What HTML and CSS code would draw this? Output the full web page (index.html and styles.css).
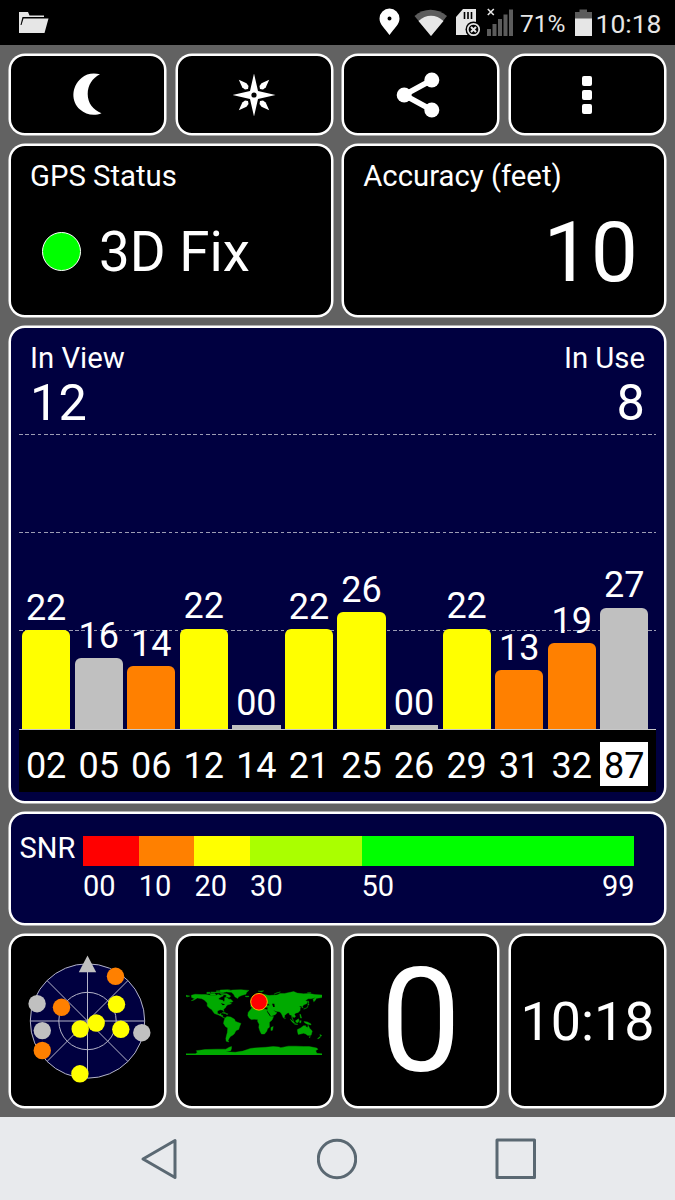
FILE: index.html
```html
<!DOCTYPE html>
<html lang="en">
<head>
    <meta charset="UTF-8">
    <meta name="viewport" content="width=device-width, initial-scale=1.0">
    <title>GPS Test</title>
    <link rel="stylesheet" href="styles.css">
</head>
<body>
    <div class="status-bar">
        <svg class="icon-folder" width="30" height="22" viewBox="0 0 30 22">
            <path fill="#e6e6e6" d="M0 0H9L10.5 3.5H25V5H3.5L1.5 13H2.5L4.5 6.5H29.5L25.5 21H0Z"/>
        </svg>
        <div class="status-right">
            <svg width="22" height="28" viewBox="0 0 22 28">
                <path fill="#fff" fill-rule="evenodd" d="M10.5 .5A10 10 0 0 0 .5 10.5C.5 16.5 6 20.5 10.5 27C15 20.5 20.5 16.5 20.5 10.5A10 10 0 0 0 10.5 .5ZM10.5 8.500A2 2 0 1 1 10.5 12.5A2 2 0 1 1 10.5 8.500Z"/>
            </svg>
            <svg class="icon-wifi" width="34" height="28" viewBox="0 0 34 28">
                <path fill="#5c5c5c" d="M.5 7C10 -1.5 23 -1.5 33 7L17 27Z"/>
                <path fill="#e6e6e6" d="M4.5 12C12 5 22 5 29.5 12L17 27Z"/>
            </svg>
            <svg class="icon-sd" width="26" height="30" viewBox="0 0 26 30">
                <path fill="#e6e6e6" d="M7 1H20V27H0V9Z"/>
                <path stroke="#000" stroke-width="1.6" d="M8.5 4V11M12 4V11M15.5 4V11"/>
                <circle cx="17.5" cy="21.5" r="8" fill="#000"/>
                <circle cx="17.5" cy="21.5" r="5.7" fill="none" stroke="#e6e6e6" stroke-width="1.7"/>
                <path stroke="#e6e6e6" stroke-width="2" d="M15 19L20 24M20 19L15 24"/>
            </svg>
            <svg class="icon-signal" width="27" height="30" viewBox="0 0 27 30">
                <path fill="#5c5c5c" d="M0 21H4V28H0ZM5.5 16H9.5V28H5.5ZM11 11H15V28H11ZM16.5 6.5H20.5V28H16.5ZM22 1.5H26V28H22Z"/>
                <path stroke="#e6e6e6" stroke-width="1.6" d="M.8 1L6.8 7M6.8 1L.8 7"/>
            </svg>
            <span class="battery-text">71%</span>
            <svg class="icon-battery" width="17" height="28" viewBox="0 0 17 28">
                <path fill="#5c5c5c" d="M4.5 .5H12V3H17V10H0V3H4.5Z"/>
                <path fill="#e6e6e6" d="M0 9.5H17V27H0Z"/>
            </svg>
            <span class="clock-text">10:18</span>
        </div>
    </div>

    <main class="dashboard">
        <button class="tile" aria-label="Night mode">
            <svg width="44" height="46" viewBox="0 0 44 46">
                <path fill="#fff" d="M34 2.2C27 .5 20.5 1.500 15.500 6C5 15 5 29.500 14 37.500C20 43 28.500 44 35.500 41.200C27 38 21.700 31 21.700 22C21.700 13 26.500 6 34 2.200Z"/>
            </svg>
        </button>
        <button class="tile" aria-label="Compass">
            <svg width="44" height="44" viewBox="-22 -22 44 44">
                <path fill="#fff" d="M0 -21.5L4 -4L21.5 0L4 4L0 21.5L-4 4L-21.5 0L-4 -4Z"/>
                <g fill="#fff">
                    <path id="ray" d="M15.2 -15.2L11.7 -7.5L9 -5.5L6 -6L5.5 -9L7.500 -11.700Z"/>
                    <use href="#ray" transform="rotate(90)"/>
                    <use href="#ray" transform="rotate(180)"/>
                    <use href="#ray" transform="rotate(270)"/>
                </g>
                <circle r="2.6"/>
            </svg>
        </button>
        <button class="tile" aria-label="Share">
            <svg width="50" height="46" viewBox="0 0 50 46">
                <path stroke="#fff" stroke-width="5.5" fill="none" d="M35.8 8L8.2 23L35.8 38"/>
                <g fill="#fff">
                    <circle cx="8.2" cy="23" r="7.500"/>
                    <circle cx="35.8" cy="8" r="7.500"/>
                    <circle cx="35.8" cy="38" r="7.500"/>
                </g>
            </svg>
        </button>
        <button class="tile" aria-label="Menu">
            <svg width="10" height="40" viewBox="0 0 10 40">
                <g fill="#fff">
                    <rect y="1" width="10" height="10" rx="2"/>
                    <rect y="15" width="10" height="10" rx="2"/>
                    <rect y="29" width="10" height="10" rx="2"/>
                </g>
            </svg>
        </button>

        <section class="tile half">
            <div class="label">GPS Status</div>
            <div class="fix"><span class="led"></span>3D Fix</div>
        </section>
        <section class="tile half">
            <div class="label">Accuracy (feet)</div>
            <div class="accuracy">10</div>
        </section>

        <section class="tile chart">
            <div class="counts">
                <div><div class="label">In View</div><div class="count">12</div></div>
                <div class="in-use"><div class="label">In Use</div><div class="count">8</div></div>
            </div>
            <div class="plot" id="plot"></div>
            <div class="axis" id="axis"></div>
        </section>

        <section class="tile snr">
            <span class="snr-title">SNR</span>
            <div class="scale">
                <div class="band red"></div>
                <div class="band orange"></div>
                <div class="band yellow"></div>
                <div class="band lime"></div>
                <div class="band green"></div>
                <div class="tick">00</div>
                <div class="tick">10</div>
                <div class="tick">20</div>
                <div class="tick">30</div>
                <div class="tick">50<span>99</span></div>
            </div>
        </section>

        <section class="tile">
            <svg width="130" height="136" viewBox="-64.5 -68 130 136">
                <circle r="57.2" fill="#000040" stroke="#b4b4c8"/>
                <circle r="28.7" fill="none" stroke="#b4b4c8"/>
                <path stroke="#b4b4c8" d="M-57 0H57M0 -57V57M-40.4 -40.4L40.4 40.4M40.4 -40.4L-40.4 40.4"/>
                <path fill="#c0c0c0" d="M0 -65.5L8.7 -48.7H-8.7Z"/>
                <g id="sky"></g>
            </svg>
        </section>
        <section class="tile">
            <!-- longitude / negative latitude coordinates -->
            <svg class="world" width="136.5" height="68.25" viewBox="-180 -90 360 180">
                <g fill="#00aa00" stroke="#00aa00" stroke-width="1">
                    <path d="M-166 -68L-156 -71L-140 -70L-128 -70L-115 -68L-108 -68L-100 -68L-95 -71L-90 -68L-82 -69L-82 -66L-87 -64L-94 -60L-93 -57L-83 -55L-80 -51L-78 -55L-78 -62L-72 -62L-67 -58L-62 -58L-56 -52L-60 -50L-66 -50L-60 -46L-66 -44L-70 -43L-74 -39L-76 -35L-81 -31L-80 -25L-83 -29L-90 -30L-97 -27L-97 -20L-91 -18L-87 -21L-88 -16L-83 -15L-83 -10L-77 -8L-79 -8L-86 -12L-94 -16L-105 -20L-113 -31L-117 -33L-124 -40L-124 -48L-131 -55L-138 -59L-150 -61L-160 -55L-166 -54L-157 -59L-165 -62Z"/>
                    <path d="M-180 -68L-170 -66L-176 -64L-180 -65ZM-73 -78L-58 -82L-35 -83L-14 -81L-20 -76L-22 -71L-32 -68L-41 -64L-44 -60L-51 -64L-54 -70L-60 -76L-72 -77ZM-90 -73L-72 -72L-62 -66L-66 -62L-75 -65L-73 -69L-88 -71ZM-118 -73L-104 -73L-101 -69L-115 -69ZM-125 -76L-116 -76L-118 -73L-125 -72ZM-90 -82L-70 -83L-63 -82L-77 -76L-90 -77ZM-115 -77L-95 -76L-80 -75L-82 -74L-113 -75ZM-100 -80L-90 -80L-91 -78L-100 -78ZM-24 -66L-14 -66L-15 -64L-22 -64ZM-85 -22L-77 -23L-74 -20L-78 -20ZM-74 -20L-69 -19L-70 -18L-74 -18Z"/>
                    <path d="M-77 -8L-72 -12L-62 -11L-52 -5L-50 0L-44 3L-35 6L-38 13L-41 22L-48 25L-53 34L-58 38L-62 40L-66 45L-69 51L-67 55L-74 53L-75 46L-73 37L-71 30L-70 18L-76 14L-81 6L-80 0Z"/>
                    <path d="M-9 -37L-9 -43L-2 -44L-4 -48L3 -51L8 -54L9 -57L12 -55L22 -55L24 -60L29 -60L22 -61L25 -65L18 -62L16 -56L11 -59L5 -59L5 -62L15 -69L26 -71L40 -67L34 -66L44 -68L60 -69L68 -73L80 -73L95 -76L104 -78L113 -74L130 -72L145 -73L160 -70L180 -69L180 -65L178 -62L163 -60L162 -56L157 -51L155 -58L162 -62L150 -59L142 -59L135 -54L141 -52L138 -46L131 -43L127 -39L129 -36L126 -35L125 -39L121 -40L118 -39L122 -37L121 -32L121 -28L116 -23L109 -21L106 -18L109 -12L105 -9L101 -13L100 -8L104 -1L100 -6L98 -16L94 -16L91 -22L87 -21L80 -15L80 -10L77 -8L73 -17L70 -22L66 -25L57 -26L50 -30L56 -24L60 -22L55 -17L44 -13L39 -21L34 -28L36 -36L28 -37L26 -40L41 -42L37 -46L30 -46L28 -42L23 -36L19 -42L13 -45L18 -40L15 -38L8 -44L3 -42L-1 -37L-6 -36Z"/>
                    <path d="M-6 -35L10 -37L11 -33L20 -31L32 -31L37 -21L43 -12L51 -12L47 -3L40 3L40 16L35 20L33 27L27 34L19 34L15 26L12 17L13 8L9 1L9 -4L0 -5L-8 -4L-14 -9L-17 -15L-16 -23L-10 -30ZM44 17L50 14L48 24L44 25ZM-5 -50L1 -51L-2 -57L-6 -58ZM-10 -52L-6 -52L-6 -55L-10 -54Z"/>
                    <path d="M114 22L122 18L130 12L136 12L136 15L141 17L142 11L146 19L153 26L150 37L145 38L140 37L136 34L130 32L122 34L116 35L114 27ZM145 41L148 41L147 43L145 43ZM167 46L173 41L174 43L168 47ZM173 35L178 38L175 41ZM95 -5L106 3L105 6L100 2ZM106 6L115 8L114 9L106 8ZM109 -1L117 -6L118 -1L115 4L110 3ZM120 -1L124 -1L122 5L120 5ZM131 1L140 2L149 7L150 10L140 8L133 4ZM120 -18L122 -18L125 -8L122 -8ZM130 -32L139 -35L142 -41L140 -36L132 -32ZM141 -42L145 -44L142 -46ZM142 -46L144 -50L142 -54ZM80 -6L82 -7L81 -9ZM52 -71L58 -74L69 -77L56 -73ZM10 -79L25 -80L20 -77ZM140 -75L150 -75L148 -74Z"/>
                    <path d="M-180 86H-155L-150 82L-153 78L-130 75L-100 74L-75 74L-66 69L-60 67L-60 72L-62 78L-75 81L-50 82L-30 79L-10 72L10 70L30 69L50 67L65 68L70 70L90 66L110 66L130 67L145 67L165 71L168 74L162 78L165 85L180 86V90H-180Z"/>
                </g>
                <g fill="#000">
                    <path d="M47 -46L53 -46L54 -37L50 -37ZM34 -27L43 -14L41 -14L33 -26ZM-88 -47L-82 -46L-77 -43L-83 -42Z"/>
                </g>
                <circle cx="12.5" cy="-51" r="22" fill="#f00" stroke="#ffc800" stroke-width="2.5"/>
            </svg>
        </section>
        <section class="tile speed">0</section>
        <section class="tile time">10:18</section>
    </main>

    <nav class="nav-bar">
        <svg width="40" height="42" viewBox="0 0 40 42">
            <path d="M4 21L36 2.5V39.5Z"/>
        </svg>
        <svg width="40" height="42" viewBox="0 0 40 42">
            <circle cx="20" cy="21" r="18.7"/>
        </svg>
        <svg width="42" height="42" viewBox="0 0 42 42">
            <rect x="2" y="2" width="37.5" height="37.5"/>
        </svg>
    </nav>

    <script>
        var satellites = [
            { prn: "02", snr: "22", height: 99, color: "yellow" },
            { prn: "05", snr: "16", height: 71, color: "gray" },
            { prn: "06", snr: "14", height: 63, color: "orange" },
            { prn: "12", snr: "22", height: 100.5, color: "yellow" },
            { prn: "14", snr: "00", height: 4, color: "gray" },
            { prn: "21", snr: "22", height: 99.7, color: "yellow" },
            { prn: "25", snr: "26", height: 117, color: "yellow" },
            { prn: "26", snr: "00", height: 4, color: "gray" },
            { prn: "29", snr: "22", height: 100.2, color: "yellow" },
            { prn: "31", snr: "13", height: 59, color: "orange" },
            { prn: "32", snr: "19", height: 86, color: "orange" },
            { prn: "87", snr: "27", height: 121.5, color: "gray", selected: true }
        ];

        var positions = [
            [28, -44.7, "#ff8000"], [-50.4, -17.3, "#c0c0c0"], [-26, -13.7, "#ff8000"],
            [29, -16.7, "#ffff00"], [8.7, 2, "#ffff00"], [-7.3, 8, "#ffff00"],
            [33.3, 8.3, "#ffff00"], [54.3, 11.7, "#c0c0c0"], [-45.2, 9.6, "#c0c0c0"],
            [-45.2, 29.5, "#ff8000"], [-7.6, 52.8, "#ffff00"]
        ];

        var plot = document.getElementById("plot");
        var axis = document.getElementById("axis");

        satellites.forEach(function(sat) {
            var column = document.createElement("div");
            column.className = "column";
            column.innerHTML = "<span>" + sat.snr + "</span>" +
                "<div class='bar " + sat.color + (sat.snr === "00" ? " empty" : "") + "' style='height: " + sat.height + "px'></div>";
            plot.appendChild(column);

            var prn = document.createElement("div");
            prn.className = sat.selected ? "prn selected" : "prn";
            prn.textContent = sat.prn;
            axis.appendChild(prn);
        });

        positions.forEach(function(p) {
            var dot = document.createElementNS("http://www.w3.org/2000/svg", "circle");
            dot.setAttribute("cx", p[0]);
            dot.setAttribute("cy", p[1]);
            dot.setAttribute("r", 8.7);
            dot.setAttribute("fill", p[2]);
            document.getElementById("sky").appendChild(dot);
        });
    </script>
</body>
</html>
```

FILE: styles.css
```css
* {
    box-sizing: border-box;
}

body {
    margin: 0;
    width: 675px;
    height: 1200px;
    overflow: hidden;
    font-family: Roboto, "Liberation Sans", sans-serif;
    background-color: #626262;
    color: #fff;
}

svg {
    display: block;
    flex: none;
}

/* Android status bar */
.status-bar {
    display: flex;
    justify-content: space-between;
    align-items: flex-start;
    height: 45px;
    padding: 0 13.5px 0 19px;
    background-color: #000;
    color: #e6e6e6;
}

.icon-folder {
    margin-top: 12px;
}

.status-right {
    display: flex;
    align-items: flex-start;
    padding-top: 8px;
}

.icon-wifi {
    margin: 1px 0 0 13px;
}

.icon-sd {
    margin-left: 8px;
}

.icon-signal {
    margin-left: 5px;
}

.battery-text {
    margin-left: 6px;
    font-size: 24.5px;
    line-height: 31px;
}

.icon-battery {
    margin: 1px 4px 0 9px;
}

.clock-text {
    font-size: 26.5px;
    line-height: 31px;
}

/* Tiles */
.dashboard {
    display: grid;
    grid-template-columns: repeat(4, 1fr);
    grid-template-rows: 81px 173px 477px 113px 174px;
    gap: 9px 9.5px;
    height: 1072px;
    padding: 9px;
}

.tile {
    display: flex;
    align-items: center;
    justify-content: center;
    min-width: 0;
    padding: 0;
    border: 2px solid #fff;
    border-radius: 16px;
    box-shadow: 0 0 0 0.5px #fff;
    background-color: #000;
    color: #fff;
}

.half {
    grid-column: span 2;
    flex-direction: column;
    align-items: stretch;
    justify-content: flex-start;
    padding: 13px 26px 0 19px;
}

.label {
    font-size: 29.3px;
    line-height: 34px;
}

.fix {
    display: flex;
    align-items: center;
    margin: 28px 0 0 12px;
    font-size: 54.7px;
    line-height: 62px;
}

.led {
    width: 39px;
    height: 39px;
    margin: -1px 18px 0 0;
    border: 1px solid #fff;
    border-radius: 50%;
    background-color: #0f0;
}

.accuracy {
    margin-top: 12px;
    font-size: 84px;
    line-height: 96px;
    text-align: right;
}

/* Satellite chart */
.chart {
    grid-column: span 4;
    flex-direction: column;
    align-items: stretch;
    justify-content: flex-start;
    padding: 1px 8px 0;
    background-color: #000040;
}

.counts {
    display: flex;
    justify-content: space-between;
    height: 105px;
    padding: 12px 11px 0;
}

.count {
    font-size: 50.5px;
    line-height: 55px;
}

.in-use {
    text-align: right;
}

.plot {
    display: flex;
    align-items: flex-end;
    gap: 4.3px;
    height: 295px;
    padding: 0 7.5px 0 3px;
    background-image: repeating-linear-gradient(90deg, #9c9cb4 0 3.7px, #000040 3.7px 6.23px), repeating-linear-gradient(90deg, #9c9cb4 0 3.7px, #000040 3.7px 6.23px), repeating-linear-gradient(90deg, #9c9cb4 0 3.7px, #000040 3.7px 6.23px);
    background-size: 100% 1px;
    background-position: 0 0, 0 98px, 0 196px;
    background-repeat: no-repeat;
}

.column {
    flex: 1 1 0;
    text-align: center;
    font-size: 36px;
    line-height: 36px;
}

.column span {
    display: block;
    margin-bottom: 4.5px;
}

.bar {
    border-radius: 6px 6px 0 0;
}

.bar.empty {
    border-radius: 0;
}

.axis {
    display: flex;
    gap: 4.3px;
    height: 63px;
    padding: 12px 7.5px 0 3px;
    border-top: 1px solid #c8c8c8;
    background-color: #000;
}

.prn {
    flex: 1 1 0;
    height: 44px;
    text-align: center;
    font-size: 36px;
    line-height: 48px;
}

.prn.selected {
    background-color: #fff;
    color: #000;
}

.gray {
    background-color: #c0c0c0;
}

.red {
    background-color: #f00;
}

.orange {
    background-color: #ff8000;
}

.yellow {
    background-color: #ff0;
}

.lime {
    background-color: #aaff00;
}

.green {
    background-color: #0f0;
}

/* SNR legend */
.snr {
    grid-column: span 4;
    align-items: flex-start;
    justify-content: flex-start;
    padding: 22px 29.5px 0 8.5px;
    background-color: #000040;
    font-size: 29px;
}

.snr-title {
    width: 63.5px;
    line-height: 24px;
}

.scale {
    display: grid;
    flex: 1;
    grid-template-columns: 10fr 10fr 10fr 20fr 49fr;
    grid-template-rows: 30px 34px;
    row-gap: 3px;
}

.tick {
    display: flex;
    justify-content: space-between;
    line-height: 34px;
}

/* Bottom tiles */
.speed {
    padding-top: 2px;
    font-size: 144px;
    line-height: 168px;
}

.time {
    font-size: 53.8px;
}

/* Android navigation bar */
.nav-bar {
    display: flex;
    justify-content: center;
    gap: 138px;
    height: 83px;
    padding-top: 21px;
    background-color: #e8eaed;
}

.nav-bar svg {
    fill: none;
    stroke: #5a6872;
    stroke-width: 3;
    stroke-linejoin: round;
}
```
